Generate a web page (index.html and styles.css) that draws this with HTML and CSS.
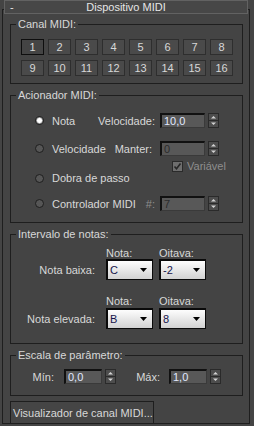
FILE: index.html
```html
<!DOCTYPE html>
<html lang="pt">
<head>
  <meta charset="UTF-8" />
  <title>Dispositivo MIDI</title>
  <link rel="stylesheet" href="styles.css">
</head>
<body>

  <div class="rollout">
    <div class="rollout-head">
      <span class="minus">-</span>
      <span class="rollout-title">Dispositivo MIDI</span>
      <span></span>
    </div>

    <div class="rollout-body">
      <!-- Canal MIDI -->
      <div class="group">
        <div class="group-title">Canal MIDI:</div>
        <div class="channels">
          <button class="chan active">1</button>
          <button class="chan">2</button>
          <button class="chan">3</button>
          <button class="chan">4</button>
          <button class="chan">5</button>
          <button class="chan">6</button>
          <button class="chan">7</button>
          <button class="chan">8</button>
          <button class="chan">9</button>
          <button class="chan">10</button>
          <button class="chan">11</button>
          <button class="chan">12</button>
          <button class="chan">13</button>
          <button class="chan">14</button>
          <button class="chan">15</button>
          <button class="chan">16</button>
        </div>
      </div>

      <!-- Acionador MIDI -->
      <div class="group">
        <div class="group-title">Acionador MIDI:</div>
        <div class="trigger">
          <div class="row first">
            <div class="opt"><span class="radio on"></span>Nota</div>
            <span class="lbl">Velocidade:</span>
            <span class="field">10,0</span>
            <svg class="spin" width="11" height="15" viewBox="0 0 11 15">
              <rect x="0.5" y="0.5" width="10" height="14" fill="#4d4d4d" stroke="#2a2a2a"/>
              <line x1="1" y1="7.5" x2="10" y2="7.5" stroke="#2a2a2a"/>
              <path d="M3 5.5 L5.5 3 L8 5.5Z" fill="#d4d4d4"/>
              <path d="M3 9.5 L5.5 12 L8 9.5Z" fill="#d4d4d4"/>
            </svg>
          </div>
          <div class="row second">
            <div class="opt"><span class="radio"></span>Velocidade</div>
            <span class="lbl manter">Manter:</span>
            <span class="field off">0</span>
            <svg class="spin" width="11" height="15" viewBox="0 0 11 15">
              <rect x="0.5" y="0.5" width="10" height="14" fill="#4d4d4d" stroke="#2a2a2a"/>
              <line x1="1" y1="7.5" x2="10" y2="7.5" stroke="#2a2a2a"/>
              <path d="M3 5.5 L5.5 3 L8 5.5Z" fill="#d4d4d4"/>
              <path d="M3 9.5 L5.5 12 L8 9.5Z" fill="#d4d4d4"/>
            </svg>
          </div>
          <div class="check-row">
            <span class="check">
              <svg width="9" height="9" viewBox="0 0 9 9"><path d="M1.5 4.5 L3.5 6.8 L7.5 1.5" fill="none" stroke="#262626" stroke-width="1.6"/></svg>
            </span>
            <span class="dim">Variável</span>
          </div>
          <div class="row third">
            <div class="opt"><span class="radio"></span>Dobra de passo</div>
          </div>
          <div class="row fourth">
            <div class="opt"><span class="radio"></span>Controlador MIDI</div>
            <span class="lbl dim">#:</span>
            <span class="field off">7</span>
            <svg class="spin" width="11" height="15" viewBox="0 0 11 15">
              <rect x="0.5" y="0.5" width="10" height="14" fill="#4d4d4d" stroke="#2a2a2a"/>
              <line x1="1" y1="7.5" x2="10" y2="7.5" stroke="#2a2a2a"/>
              <path d="M3 5.5 L5.5 3 L8 5.5Z" fill="#d4d4d4"/>
              <path d="M3 9.5 L5.5 12 L8 9.5Z" fill="#d4d4d4"/>
            </svg>
          </div>
        </div>
      </div>

      <!-- Intervalo de notas -->
      <div class="group">
        <div class="group-title">Intervalo de notas:</div>
        <div class="notes">
          <div class="note-head"><span></span><span>Nota:</span><span>Oitava:</span></div>
          <div class="note-row">
            <span class="note-lbl">Nota baixa:</span>
            <div class="drop"><span>C</span><svg width="7" height="4" viewBox="0 0 7 4"><path d="M0 0 H7 L3.5 4Z" fill="#000"/></svg></div>
            <div class="drop"><span>-2</span><svg width="7" height="4" viewBox="0 0 7 4"><path d="M0 0 H7 L3.5 4Z" fill="#000"/></svg></div>
          </div>
          <div class="note-head second"><span></span><span>Nota:</span><span>Oitava:</span></div>
          <div class="note-row">
            <span class="note-lbl">Nota elevada:</span>
            <div class="drop"><span>B</span><svg width="7" height="4" viewBox="0 0 7 4"><path d="M0 0 H7 L3.5 4Z" fill="#000"/></svg></div>
            <div class="drop"><span>8</span><svg width="7" height="4" viewBox="0 0 7 4"><path d="M0 0 H7 L3.5 4Z" fill="#000"/></svg></div>
          </div>
        </div>
      </div>

      <!-- Escala de parâmetro -->
      <div class="group">
        <div class="group-title">Escala de parâmetro:</div>
        <div class="scale">
          <span class="slbl">Mín:</span>
          <span class="field sm">0,0</span>
          <svg class="spin" width="11" height="15" viewBox="0 0 11 15">
            <rect x="0.5" y="0.5" width="10" height="14" fill="#4d4d4d" stroke="#2a2a2a"/>
            <line x1="1" y1="7.5" x2="10" y2="7.5" stroke="#2a2a2a"/>
            <path d="M3 5.5 L5.5 3 L8 5.5Z" fill="#d4d4d4"/>
            <path d="M3 9.5 L5.5 12 L8 9.5Z" fill="#d4d4d4"/>
          </svg>
          <span class="slbl max">Máx:</span>
          <span class="field sm">1,0</span>
          <svg class="spin" width="11" height="15" viewBox="0 0 11 15">
            <rect x="0.5" y="0.5" width="10" height="14" fill="#4d4d4d" stroke="#2a2a2a"/>
            <line x1="1" y1="7.5" x2="10" y2="7.5" stroke="#2a2a2a"/>
            <path d="M3 5.5 L5.5 3 L8 5.5Z" fill="#d4d4d4"/>
            <path d="M3 9.5 L5.5 12 L8 9.5Z" fill="#d4d4d4"/>
          </svg>
        </div>
      </div>

      <button class="viewer">Visualizador de canal MIDI...</button>
    </div>
  </div>

</body>
</html>
```

FILE: styles.css
```css
* {
  box-sizing: border-box;
}

body {
  margin: 0;
  background: #444;
  font: 11px 'Liberation Sans', Arial, sans-serif;
  color: #d8d8d8;
  width: 254px;
  height: 426px;
  overflow: hidden;
}

.rollout {
  margin: 9px 4px 0 2px;
  height: 415px;
  border: 1px solid #1e1e1e;
}

.rollout-head {
  margin: -10px 1px 0;
  height: 14px;
  border: 1px solid #626262;
  background: #474747;
  display: grid;
  grid-template-columns: 1fr auto 1fr;
  align-items: center;
  line-height: 12px;
  color: #e6e6e6;
}

.minus {
  padding-left: 5px;
}

.rollout-body {
  padding: 0 6px 0 7px;
}

.group {
  border: 1px solid #1e1e1e;
  margin-top: 11px;
}

.group:first-child {
  margin-top: 10px;
}

.group-title {
  display: table;
  margin: -7px 0 0 5px;
  padding: 0 2px;
  height: 13px;
  line-height: 13px;
  background: #444;
}

/* channel buttons */
.channels {
  display: grid;
  grid-template-columns: repeat(8, 23px);
  gap: 5px 4px;
  padding: 8px 0 7px 10px;
}

.chan {
  width: 23px;
  height: 16px;
  padding: 0;
  border: 1px solid #2e2e2e;
  background: #4a4a4a;
  color: #d8d8d8;
  font: inherit;
  line-height: 14px;
}

.chan.active {
  border-color: #0e0e0e;
  background: #444;
}

/* trigger */
.trigger {
  padding: 0 23px 11px 24px;
}

.row {
  display: flex;
  align-items: center;
  height: 15px;
}

.row.first { margin-top: 11px; }
.row.second { margin-top: 13px; }
.row.third { height: 12px; }
.row.fourth { margin-top: 12px; }

.opt {
  flex: 1;
  display: flex;
  align-items: center;
  gap: 8px;
  white-space: nowrap;
}

.radio {
  width: 9px;
  height: 9px;
  border-radius: 50%;
  border: 1px solid #1e1e1e;
  background: #565656;
}

.radio.on {
  background: radial-gradient(circle, #fff 0 2px, #9a9a9a 3px);
}

.lbl {
  margin-right: 5px;
}

.lbl.manter {
  margin-right: 8px;
}

.dim {
  color: #8e8e8e;
}

.field {
  width: 45px;
  height: 15px;
  border-top: 2px solid #111;
  border-left: 2px solid #111;
  border-right: 1px solid #3a3a3a;
  border-bottom: 1px solid #3a3a3a;
  background: #585858;
  color: #e0e8ff;
  padding-left: 2px;
  line-height: 12px;
}

.field.off {
  color: #2c2c2c;
}

.field.sm {
  width: 38px;
}

.spin {
  margin-left: 3px;
  flex: none;
}

.check-row {
  display: flex;
  align-items: center;
  gap: 4px;
  height: 12px;
  margin-top: 4px;
  padding-left: 137px;
}

.check {
  width: 11px;
  height: 11px;
  border: 1px solid #2a2a2a;
  background: #6e6e6e;
  display: flex;
  align-items: center;
  justify-content: center;
}

/* note range */
.notes {
  padding-bottom: 14px;
}

.note-head {
  display: grid;
  grid-template-columns: 95px 53px auto;
  height: 12px;
  line-height: 12px;
  margin-top: 6px;
}

.note-head.second {
  margin-top: 15px;
}

.note-head.second + .note-row {
  margin-top: 1px;
}

.note-row {
  display: grid;
  grid-template-columns: 95px 53px 47px;
  align-items: center;
}

.note-lbl {
  text-align: right;
  padding-right: 11px;
}

.drop {
  width: 47px;
  height: 21px;
  border: 2px solid #0a0a0a;
  border-right-width: 1px;
  border-bottom-width: 1px;
  background: linear-gradient(#fdfdfd, #d2d2d2);
  display: flex;
  align-items: center;
  justify-content: space-between;
  padding: 0 5px 0 2px;
  color: #14144a;
}

/* parameter scale */
.scale {
  display: flex;
  align-items: center;
  margin-top: 7px;
  padding-bottom: 11px;
}

.slbl {
  width: 53px;
  text-align: right;
  padding-right: 10px;
}

.slbl.max {
  padding-right: 9px;
}

.viewer {
  display: block;
  margin-top: 5px;
  width: 144px;
  height: 23px;
  padding: 0 0 0 2px;
  border: 1px solid #1e1e1e;
  background: #454545;
  color: #d8d8d8;
  font: inherit;
  text-align: left;
}
```
